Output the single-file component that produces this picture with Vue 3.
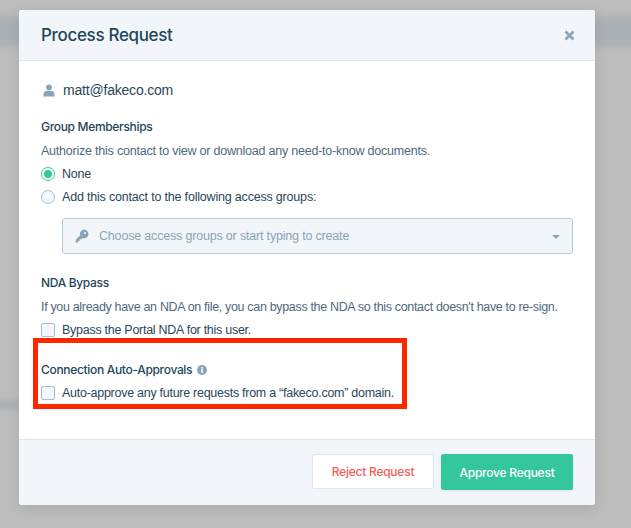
<script setup>
</script>

<template>
  <div class="page">
    <div class="band"></div>
    <div class="smudge"></div>
    <div class="modal">
      <header class="head">
        <h1>Process Request</h1>
        <svg class="close" width="11" height="11" viewBox="0 0 11 11"><path d="M1.5 1.5l8 8M9.5 1.5l-8 8" stroke="#8aa3b6" stroke-width="2.6" fill="none"/></svg>
      </header>
      <div class="body">
        <div class="user">
          <svg width="12" height="13" viewBox="0 0 13 14"><circle cx="6.5" cy="3.6" r="3.2" fill="#8aa5b9"/><path d="M0.5 13.5v-2.6c0-2.4 1.8-3.7 3.4-3.7h5.2c1.600 0 3.400 1.300 3.400 3.700v2.600z" fill="#8aa5b9"/></svg>
          <span>matt@fakeco.com</span>
        </div>

        <h2 class="first">Group Memberships</h2>
        <p>Authorize this contact to view or download any need-to-know documents.</p>
        <label class="opt"><span class="radio on"><i></i></span>None</label>
        <label class="opt wide"><span class="radio"></span>Add this contact to the following access groups:</label>
        <div class="select">
          <svg class="key" width="14" height="14" viewBox="0 0 14 14"><path d="M9 0.6a4.4 4.400 0 1 1-1.500 8.500L6.300 10.300H4.800v1.500H3.300v1.600H0.700v-2.600l4.500-4.500A4.400 4.400 0 0 1 9 0.600z" fill="#8aa5b9"/><circle cx="10" cy="4" r="1.100" fill="#f2f6fa"/></svg>
          <span>Choose access groups or start typing to create</span>
          <i class="caret"></i>
        </div>

        <h2 class="nda">NDA Bypass</h2>
        <p class="long">If you already have an NDA on file, you can bypass the NDA so this contact doesn't have to re-sign.</p>
        <label class="opt narrow"><span class="check"></span>Bypass the Portal NDA for this user.</label>

        <h2 class="auto">Connection Auto-Approvals
          <svg width="10" height="10" viewBox="0 0 10 10"><circle cx="5" cy="5" r="5" fill="#8aa5b9"/><rect x="4.200" y="4.300" width="1.700" height="3.500" fill="#fff"/><rect x="4.200" y="2.100" width="1.700" height="1.500" fill="#fff"/></svg>
        </h2>
        <label class="opt narrow"><span class="check"></span>Auto-approve any future requests from a “fakeco.com” domain.</label>
      </div>
      <footer class="foot">
        <button class="reject">Reject Request</button>
        <button class="approve">Approve Request</button>
      </footer>
    </div>
    <div class="redbox"></div>
  </div>
</template>

<style>
html, body { margin: 0; padding: 0; background: #bcbcbc; }
</style>

<style scoped>
.page {
  position: relative;
  width: 631px;
  height: 528px;
  overflow: hidden;
  background: #bdbdbd;
  font-family: "Liberation Sans", Arial, sans-serif;
  color: #2b4658;
}
.band {
  position: absolute;
  left: -10px;
  right: -10px;
  top: 16px;
  height: 30px;
  background: #aab0b4;
  filter: blur(4px);
}
.smudge {
  position: absolute;
  left: -4px;
  top: 401px;
  width: 30px;
  height: 8px;
  background: #a9aeb1;
  filter: blur(3px);
}
.modal {
  position: absolute;
  left: 19px;
  top: 10px;
  width: 576px;
  height: 495px;
  background: #fff;
  border-radius: 3px;
  box-shadow: 0 4px 14px rgba(0, 0, 0, 0.1);
  display: flex;
  flex-direction: column;
  overflow: hidden;
}
.head {
  height: 51px;
  flex: none;
  box-sizing: border-box;
  background: #f2f6fa;
  border-bottom: 1px solid #dde6ee;
  display: flex;
  align-items: center;
  justify-content: space-between;
  padding: 0 20px 0 22px;
}
h1 {
  margin: 0;
  font-family: Inter, "Liberation Sans", sans-serif;
  font-size: 17px;
  line-height: 24px;
  font-weight: 500;
  letter-spacing: -0.33px;
  color: #22465c;
}
.body {
  flex: 1;
  padding: 19px 22px 0;
}
.user {
  display: flex;
  align-items: center;
  gap: 8px;
  height: 20px;
  padding-left: 2px;
  font-size: 14px;
  letter-spacing: -0.2px;
  color: #2b4658;
}
h2 {
  margin: 0;
  font-family: Inter, "Liberation Sans", sans-serif;
  font-size: 12px;
  line-height: 18px;
  font-weight: 500;
  letter-spacing: -0.32px;
  color: #22465c;
}
h2.first { margin-top: 18px; }
h2.nda { margin-top: 20px; }
h2.auto {
  margin-top: 22px;
  display: flex;
  align-items: center;
  gap: 5px;
}
p {
  margin: 6px 0 0;
  font-size: 12.5px;
  line-height: 18px;
  letter-spacing: -0.22px;
  color: #4d6a80;
  white-space: nowrap;
}
p.long { letter-spacing: -0.33px; }
.opt {
  display: flex;
  align-items: center;
  gap: 7px;
  height: 18px;
  margin-top: 5px;
  font-size: 12.5px;
  letter-spacing: -0.23px;
  color: #2b4658;
  white-space: nowrap;
}
.opt.wide { letter-spacing: -0.19px; }
.opt.narrow { letter-spacing: -0.27px; }
.radio {
  width: 14px;
  height: 14px;
  box-sizing: border-box;
  border-radius: 50%;
  border: 1px solid #a9bccb;
  background: #f5f8fb;
  display: flex;
  align-items: center;
  justify-content: center;
}
.radio.on { border-color: #34c69c; background: #fff; }
.radio i {
  width: 8px;
  height: 8px;
  border-radius: 50%;
  background: #34c69c;
}
.check {
  width: 14px;
  height: 14px;
  box-sizing: border-box;
  border-radius: 2px;
  border: 1px solid #a9bccb;
  background: #f5f8fb;
}
.select {
  position: relative;
  margin: 12px 0 0 21px;
  width: 511px;
  height: 36px;
  box-sizing: border-box;
  border: 1px solid #b7c8d6;
  border-radius: 3px;
  background: #f2f6fa;
  display: flex;
  align-items: center;
  gap: 10px;
  padding-left: 12px;
  font-size: 12.5px;
  letter-spacing: -0.18px;
  color: #8aa3b6;
}
.caret {
  position: absolute;
  right: 12px;
  top: 16px;
  border-left: 4px solid transparent;
  border-right: 4px solid transparent;
  border-top: 4px solid #8aa3b6;
}
.foot {
  height: 66px;
  flex: none;
  box-sizing: border-box;
  background: #f2f6fa;
  border-top: 1px solid #dde6ee;
  display: flex;
  align-items: flex-start;
  justify-content: flex-end;
  gap: 7px;
  padding: 14px 22px 0 0;
}
button {
  box-sizing: border-box;
  border-radius: 2px;
  font-family: Inter, "Liberation Sans", sans-serif;
  font-size: 12px;
  font-weight: 500;
  letter-spacing: -0.24px;
  padding: 0;
}
.reject {
  width: 122px;
  height: 35px;
  background: #fff;
  border: 1px solid #dde6ee;
  color: #f2605c;
}
.approve {
  width: 132px;
  height: 36px;
  background: #34c69c;
  border: 0;
  color: #fff;
  box-shadow: 0 1px 3px rgba(0, 0, 0, 0.08);
}
.redbox {
  position: absolute;
  left: 33px;
  top: 338px;
  width: 374px;
  height: 71px;
  box-sizing: border-box;
  border: 5px solid #ff2600;
}
</style>
